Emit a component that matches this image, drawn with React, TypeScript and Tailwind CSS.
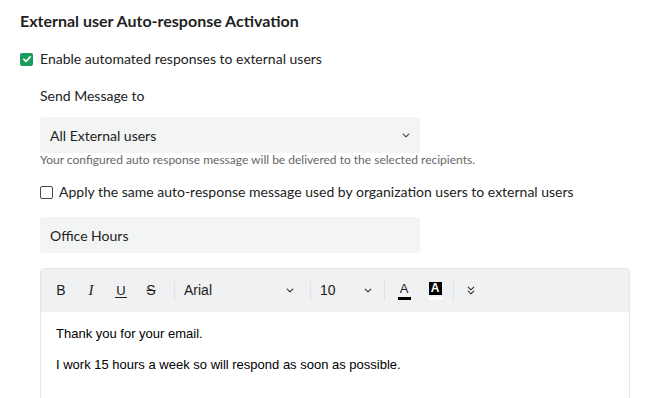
import React, { useState } from 'react';

const Chevron = ({ className = '' }: { className?: string }) => (
  <svg viewBox="0 0 10 6" className={className} fill="none" stroke="currentColor" strokeWidth="1.4" strokeLinecap="round" strokeLinejoin="round">
    <path d="M1.5 1.2 5 4.6 8.5 1.2" />
  </svg>
);

const Sep = () => <div className="w-px h-[20px] bg-[#dfe2e6]" />;

export default function App() {
  const [enabled, setEnabled] = useState(true);
  const [sameMsg, setSameMsg] = useState(false);

  return (
    <div className="w-[659px] h-[398px] overflow-hidden bg-white pl-5 pt-[11px] font-['Lato','Noto_Sans',sans-serif] text-[#222]">
      <h2 className="text-[16px] leading-5 font-bold text-[#1f1f1f]">External user Auto-response Activation</h2>

      <label className="mt-[18px] flex items-center gap-[7px] text-[14px] leading-5 cursor-pointer">
        <span
          onClick={() => setEnabled(!enabled)}
          className={`w-[13px] h-[13px] rounded-[2px] flex items-center justify-center ${enabled ? 'bg-[#1a9c5b]' : 'border border-[#555] bg-white'}`}
        >
          {enabled && (
            <svg viewBox="0 0 12 12" className="w-[10px] h-[10px]" fill="none" stroke="white" strokeWidth="2" strokeLinecap="round" strokeLinejoin="round">
              <path d="M2.2 6.3 4.8 8.8 9.8 3.4" />
            </svg>
          )}
        </span>
        Enable automated responses to external users
      </label>

      <div className="pl-5">
        <div className="mt-[17px] text-[14px] leading-5">Send Message to</div>

        <div className="mt-[11px] w-[380px] h-[36px] rounded-[4px] bg-[#f3f4f4] flex items-center justify-between pl-[10px] pr-[10px] text-[14px]">
          <span>All External users</span>
          <Chevron className="w-[8px] h-[5px] text-[#444]" />
        </div>
        <p className="text-[12px] leading-[14px] text-[#666]">Your configured auto response message will be delivered to the selected recipients.</p>

        <label className="mt-[15px] flex items-center gap-[6px] text-[14px] leading-5 cursor-pointer">
          <span
            onClick={() => setSameMsg(!sameMsg)}
            className={`w-[13px] h-[13px] rounded-[2px] border ${sameMsg ? 'bg-[#1a9c5b] border-[#1a9c5b]' : 'border-[#4a4a4a] bg-white'}`}
          />
          Apply the same auto-response message used by organization users to external users
        </label>

        <div className="mt-[15px] w-[380px] h-[36px] rounded-[4px] bg-[#f3f4f4] flex items-center pl-[10px] text-[14px]">Office Hours</div>

        <div className="mt-[15px] w-[590px] border border-[#e3e5e8] rounded-[4px] overflow-hidden">
          <div className="h-[43px] bg-[#f0f1f3] flex items-center pl-[5px] font-['Liberation_Sans',Arial,sans-serif] text-[#222]">
            <button className="w-[30px] h-[30px] flex items-center justify-center text-[14px]">B</button>
            <button className="w-[30px] h-[30px] flex items-center justify-center text-[15px] italic font-['Liberation_Serif',serif]">I</button>
            <button className="w-[30px] h-[30px] flex items-center justify-center text-[13px]">
              <span className="border-b border-[#222] leading-[13px] px-[1px]">U</span>
            </button>
            <button className="w-[30px] h-[30px] flex items-center justify-center text-[14px] line-through">S</button>
            <div className="ml-[8px]"><Sep /></div>
            <div className="w-[123px] flex items-center justify-between pl-[9px] pr-[4px] text-[14px]">
              <span>Arial</span>
              <Chevron className="w-[8px] h-[5px] text-[#333]" />
            </div>
            <div className="ml-[12px]"><Sep /></div>
            <div className="w-[63px] flex items-center justify-between pl-[9px] pr-[2px] text-[14px]">
              <span>10</span>
              <Chevron className="w-[8px] h-[5px] text-[#333]" />
            </div>
            <div className="ml-[10px]"><Sep /></div>
            <button className="ml-[4px] w-[30px] h-[30px] flex flex-col items-center justify-center">
              <span className="text-[13px] leading-[13px]">A</span>
              <span className="mt-[2px] w-[13px] h-[3px] bg-black" />
            </button>
            <button className="ml-[1px] w-[30px] h-[30px] flex flex-col items-center justify-center">
              <span className="w-[13px] h-[13px] flex items-center justify-center text-[12px] leading-[13px] font-bold text-white bg-black">A</span>
              <span className="mt-[2px] w-[13px] h-[3px] bg-white" />
            </button>
            <div className="ml-[3px]"><Sep /></div>
            <button className="ml-[2px] w-[30px] h-[30px] flex flex-col items-center justify-center text-[#333]">
              <Chevron className="w-[8px] h-[5px]" />
              <Chevron className="w-[8px] h-[5px] -mt-[1px]" />
            </button>
          </div>
          <div className="pl-[15px] pt-[14px] pb-[40px] font-['Liberation_Sans',Arial,sans-serif] text-[13px] text-black leading-[16px]">
            <p>Thank you for your email.</p>
            <p className="mt-[15px]">I work 15 hours a week so will respond as soon as possible.</p>
          </div>
        </div>
      </div>
    </div>
  );
}
